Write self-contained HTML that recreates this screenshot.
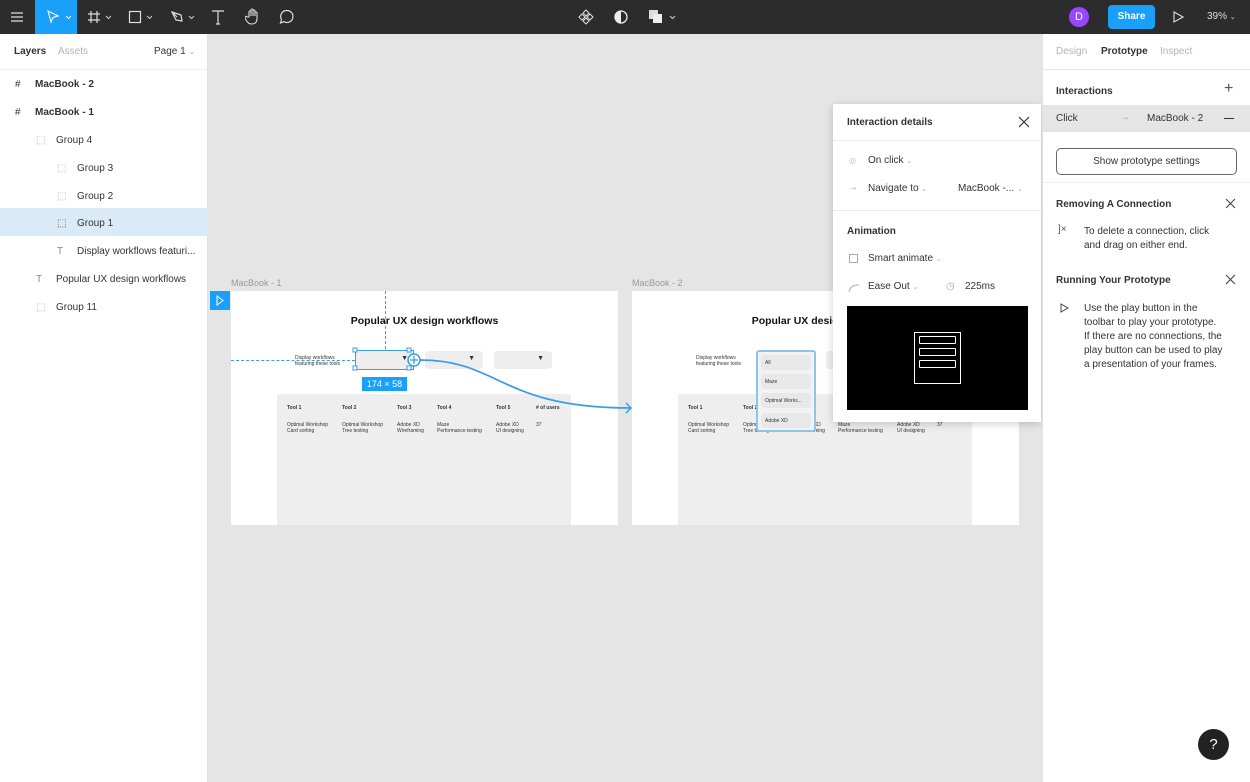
<!DOCTYPE html>
<html><head><style>
*{margin:0;padding:0;box-sizing:border-box}
body{width:1250px;height:782px;overflow:hidden;font-family:"Liberation Sans",sans-serif;background:#e5e5e5;position:relative;font-size:11px;color:#333}
.a{position:absolute}
.tb{left:0;top:0;width:1250px;height:34px;background:#2c2c2c}
.lp{left:0;top:34px;width:208px;height:748px;background:#fff;border-right:1px solid #e2e2e2}
.rp{left:1042px;top:34px;width:208px;height:748px;background:#fff;border-left:1px solid #e2e2e2}
.row{position:absolute;left:0;width:208px;height:28px;font-size:10px;line-height:28px;color:#333}
.row span{top:2px}
.sm{font-size:5px;color:#333;line-height:6px}
.b{font-weight:bold}
</style></head><body>
<div class="a tb">
 <svg class="a" style="left:10px;top:10px" width="14" height="14"><path d="M1 3h12M1 7h12M1 11h12" stroke="#ddd" stroke-width="1.2"/></svg>
 <div class="a" style="left:35px;top:0;width:42px;height:34px;background:#18a0fb"></div>
 <svg class="a" style="left:46px;top:10px" width="26" height="14"><path d="M2 1l10 5-5 1.5L5 12z" fill="none" stroke="#fff" stroke-width="1.1"/><path d="M20 6l2.5 2.5L25 6" fill="none" stroke="#fff"/></svg>
 <svg class="a" style="left:87px;top:10px" width="28" height="14"><path d="M4 1v12M10 1v12M1 4h12M1 10h12" stroke="#ddd" stroke-width="1.2"/><path d="M19 6l2.5 2.5L24 6" fill="none" stroke="#ccc"/></svg>
 <svg class="a" style="left:128px;top:10px" width="28" height="14"><rect x="1.5" y="1.5" width="11" height="11" fill="none" stroke="#ddd" stroke-width="1.2"/><path d="M19 6l2.5 2.5L24 6" fill="none" stroke="#ccc"/></svg>
 <svg class="a" style="left:170px;top:10px" width="28" height="14"><path d="M2 2l9 3 1 6-6-1z M2 2l5 5" fill="none" stroke="#ddd" stroke-width="1.2"/><path d="M19 6l2.5 2.5L24 6" fill="none" stroke="#ccc"/></svg>
 <svg class="a" style="left:211px;top:9px" width="14" height="16"><path d="M1 2h12M7 2v13M5 15h4" stroke="#ddd" stroke-width="1.2" fill="none"/></svg>
 <svg class="a" style="left:245px;top:8px" width="16" height="18"><path d="M4 9V4a1 1 0 012 0v4V2a1 1 0 012 0v6V3a1 1 0 012 0v5V5a1 1 0 012 0v6c0 3-2 5-5 5s-4-1-6-4l-1-2a1 1 0 012-1z" fill="none" stroke="#ddd" stroke-width="1.1"/></svg>
 <svg class="a" style="left:279px;top:9px" width="16" height="16"><path d="M8 1.5a6 6 0 11-3 11.2L1.5 14l1-3.5A6 6 0 018 1.5z" fill="none" stroke="#ddd" stroke-width="1.2"/></svg>
 <svg class="a" style="left:578px;top:9px" width="16" height="16"><path d="M8 1l3 3-3 3-3-3zM8 9l3 3-3 3-3-3zM4 5l3 3-3 3-3-3zM12 5l3 3-3 3-3-3z" fill="none" stroke="#ddd" stroke-width="1"/></svg>
 <svg class="a" style="left:614px;top:10px" width="14" height="14"><circle cx="7" cy="7" r="6" fill="none" stroke="#eee" stroke-width="1.3"/><path d="M7 1a6 6 0 000 12z" fill="#eee"/></svg>
 <svg class="a" style="left:648px;top:9px" width="30" height="16"><rect x="1" y="1" width="9" height="9" fill="#ddd"/><rect x="5" y="5" width="9" height="9" fill="#eee"/><path d="M22 7l2.5 2.5L27 7" fill="none" stroke="#ccc"/></svg>
 <div class="a" style="left:1069px;top:7px;width:20px;height:20px;border-radius:50%;background:#9747ff;color:#fff;font-size:11px;line-height:20px;text-align:center">D</div>
 <div class="a" style="left:1108px;top:5px;width:47px;height:24px;border-radius:4px;background:#18a0fb;color:#fff;font-size:10px;font-weight:bold;line-height:24px;text-align:center">Share</div>
 <svg class="a" style="left:1172px;top:11px" width="12" height="12"><path d="M2 1l9 5-9 5z" fill="none" stroke="#ddd" stroke-width="1.1"/></svg>
 <div class="a" style="left:1207px;top:11px;color:#ddd;font-size:10px">39% <span style="font-size:7px">⌄</span></div>
</div>

<div class="a lp">
 <div class="a b" style="left:14px;top:12px;font-size:10px;color:#333">Layers</div>
 <div class="a" style="left:58px;top:12px;font-size:10px;color:#b3b3b3">Assets</div>
 <div class="a" style="left:154px;top:12px;font-size:10px;color:#333">Page 1 <span style="color:#aaa;font-size:8px">⌄</span></div>
 <div class="a" style="left:0;top:35px;width:208px;height:1px;background:#eee"></div>
 <div class="row b" style="top:35px"><span style="position:absolute;left:15px;font-weight:normal">#</span><span style="position:absolute;left:35px">MacBook - 2</span></div>
 <div class="row b" style="top:63px"><span style="position:absolute;left:15px;font-weight:normal">#</span><span style="position:absolute;left:35px">MacBook - 1</span></div>
 <div class="row" style="top:91px"><span style="position:absolute;left:36px;color:#aaa">⬚</span><span style="position:absolute;left:56px">Group 4</span></div>
 <div class="row" style="top:119px"><span style="position:absolute;left:57px;color:#aaa">⬚</span><span style="position:absolute;left:77px">Group 3</span></div>
 <div class="row" style="top:147px"><span style="position:absolute;left:57px;color:#aaa">⬚</span><span style="position:absolute;left:77px">Group 2</span></div>
 <div class="row" style="top:174px;background:#daebf7"><span style="position:absolute;left:57px;color:#555">⬚</span><span style="position:absolute;left:77px">Group 1</span></div>
 <div class="row" style="top:202px"><span style="position:absolute;left:57px;color:#888">T</span><span style="position:absolute;left:77px">Display workflows featuri...</span></div>
 <div class="row" style="top:230px"><span style="position:absolute;left:36px;color:#888">T</span><span style="position:absolute;left:56px">Popular UX design workflows</span></div>
 <div class="row" style="top:258px"><span style="position:absolute;left:36px;color:#aaa">⬚</span><span style="position:absolute;left:56px">Group 11</span></div>
</div>

<!-- Frame 1 -->
<div class="a" style="left:231px;top:278px;font-size:9px;color:#999">MacBook - 1</div>
<div class="a" style="left:210px;top:291px;width:20px;height:19px;background:#18a0fb"><svg width="20" height="19"><path d="M7 5l6 4.5-6 4.5z" fill="none" stroke="#fff"/></svg></div>
<div class="a" style="left:231px;top:291px;width:387px;height:234px;background:#fff">
 <div class="a b" style="left:0;width:387px;top:24px;text-align:center;font-size:10.5px;color:#111">Popular UX design workflows</div>
 <div class="a sm" style="left:64px;top:64px">Display workflows<br>featuring these tools</div>
 <div class="a" style="left:124px;top:59px;width:59px;height:20px;background:#eee;border:1.5px solid #3a9ee4"><span style="position:absolute;right:5px;top:4px;font-size:7px">▼</span></div>
 <div class="a" style="left:194px;top:60px;width:58px;height:18px;background:#eee;border-radius:4px"><span style="position:absolute;right:8px;top:4px;font-size:7px">▼</span></div>
 <div class="a" style="left:263px;top:60px;width:58px;height:18px;background:#eee;border-radius:4px"><span style="position:absolute;right:8px;top:4px;font-size:7px">▼</span></div>
 <div class="a" style="left:46px;top:103px;width:294px;height:131px;background:#eee"></div>
 <div class="a sm b" style="left:56px;top:114px">Tool 1</div><div class="a sm b" style="left:111px;top:114px">Tool 2</div><div class="a sm b" style="left:166px;top:114px">Tool 3</div><div class="a sm b" style="left:206px;top:114px">Tool 4</div><div class="a sm b" style="left:265px;top:114px">Tool 5</div><div class="a sm b" style="left:305px;top:114px"># of users</div>
 <div class="a sm" style="left:56px;top:131px">Optimal Workshop<br>Card sorting</div><div class="a sm" style="left:111px;top:131px">Optimal Workshop<br>Tree testing</div><div class="a sm" style="left:166px;top:131px">Adobe XD<br>Wireframing</div><div class="a sm" style="left:206px;top:131px">Maze<br>Performance testing</div><div class="a sm" style="left:265px;top:131px">Adobe XD<br>UI designing</div><div class="a sm" style="left:305px;top:131px">37</div>
</div>
<div class="a" style="left:385px;top:291px;border-left:1px dashed #3a9ee4;height:58px"></div>
<div class="a" style="left:231px;top:360px;border-top:1px dashed #3a9ee4;width:124px"></div>
<div class="a" style="left:362px;top:377px;width:45px;height:14px;background:#18a0fb;color:#fff;font-size:9px;line-height:14px;text-align:center">174 × 58</div>
<svg class="a" style="left:350px;top:345px" width="290" height="70">
 <rect x="3" y="3" width="4" height="4" fill="#fff" stroke="#3a9ee4"/><rect x="57" y="3" width="4" height="4" fill="#fff" stroke="#3a9ee4"/><rect x="3" y="21" width="4" height="4" fill="#fff" stroke="#3a9ee4"/><rect x="57" y="21" width="4" height="4" fill="#fff" stroke="#3a9ee4"/>
 <path d="M70 15C150 15 150 63 280 63" fill="none" stroke="#3a9ee4" stroke-width="1.8"/>
 <path d="M276 58l5 5-5 5" fill="none" stroke="#3a9ee4" stroke-width="1.5"/>
 <circle cx="64" cy="15" r="6" fill="#fff" stroke="#3a9ee4" stroke-width="1.5"/><path d="M64 11v8M60 15h8" stroke="#3a9ee4" stroke-width="1.3"/>
</svg>

<!-- Frame 2 -->
<div class="a" style="left:632px;top:278px;font-size:9px;color:#999">MacBook - 2</div>
<div class="a" style="left:632px;top:291px;width:387px;height:234px;background:#fff">
 <div class="a b" style="left:0;width:387px;top:24px;text-align:center;font-size:10.5px;color:#111">Popular UX design workflows</div>
 <div class="a sm" style="left:64px;top:64px">Display workflows<br>featuring these tools</div>
 <div class="a" style="left:194px;top:60px;width:58px;height:18px;background:#eee;border-radius:4px"></div>
 <div class="a" style="left:46px;top:103px;width:294px;height:131px;background:#eee"></div>
 <div class="a sm b" style="left:56px;top:114px">Tool 1</div><div class="a sm b" style="left:111px;top:114px">Tool 2</div>
 <div class="a sm" style="left:56px;top:131px">Optimal Workshop<br>Card sorting</div><div class="a sm" style="left:111px;top:131px">Optimal Workshop<br>Tree testing</div><div class="a sm" style="left:166px;top:131px">Adobe XD<br>Wireframing</div><div class="a sm" style="left:206px;top:131px">Maze<br>Performance testing</div><div class="a sm" style="left:265px;top:131px">Adobe XD<br>UI designing</div><div class="a sm" style="left:305px;top:131px">37</div>
 <div class="a" style="left:124px;top:59px;width:60px;height:82px;background:#f2f2f2;border:2px solid #8cc4ec;border-radius:3px">
  <div class="a sm" style="left:3px;top:3px;width:50px;height:15px;background:#e8e8e8;border-radius:4px;padding:5px 4px">All</div>
  <div class="a sm" style="left:3px;top:22px;width:50px;height:15px;background:#e8e8e8;border-radius:4px;padding:5px 4px">Maze</div>
  <div class="a sm" style="left:3px;top:41px;width:50px;height:15px;background:#e8e8e8;border-radius:4px;padding:5px 4px">Optimal Works...</div>
  <div class="a sm" style="left:3px;top:61px;width:50px;height:15px;background:#e8e8e8;border-radius:4px;padding:5px 4px">Adobe XD</div>
 </div>
</div>

<!-- Popup -->
<div class="a" style="left:833px;top:104px;width:208px;height:318px;background:#fff;box-shadow:0 2px 8px rgba(0,0,0,.18);font-size:10px">
 <div class="a b" style="left:14px;top:13px">Interaction details</div>
 <svg class="a" style="left:185px;top:12px" width="12" height="12"><path d="M1 1l10 10M11 1L1 11" stroke="#333" stroke-width="1.2"/></svg>
 <div class="a" style="left:0;top:36px;width:208px;height:1px;background:#e8e8e8"></div>
 <div class="a" style="left:16px;top:52px;color:#bbb;font-size:8px">◎</div>
 <div class="a" style="left:35px;top:51px">On click <span style="color:#aaa;font-size:7px">⌄</span></div>
 <div class="a" style="left:15px;top:78px;color:#aaa">→</div>
 <div class="a" style="left:35px;top:79px">Navigate to <span style="color:#aaa;font-size:7px">⌄</span></div>
 <div class="a" style="left:125px;top:79px">MacBook -... <span style="color:#aaa;font-size:7px">⌄</span></div>
 <div class="a" style="left:0;top:106px;width:208px;height:1px;background:#e8e8e8"></div>
 <div class="a b" style="left:14px;top:122px">Animation</div>
 <div class="a" style="left:16px;top:150px;width:9px;height:9px;border:1px solid #aaa"></div>
 <div class="a" style="left:35px;top:149px">Smart animate <span style="color:#aaa;font-size:7px">⌄</span></div>
 <svg class="a" style="left:15px;top:179px" width="12" height="10"><path d="M1 9Q2 2 11 2" fill="none" stroke="#aaa"/></svg>
 <div class="a" style="left:35px;top:177px">Ease Out <span style="color:#aaa;font-size:7px">⌄</span></div>
 <div class="a" style="left:113px;top:177px;color:#aaa">◷</div>
 <div class="a" style="left:132px;top:177px">225ms</div>
 <div class="a" style="left:14px;top:202px;width:181px;height:104px;background:#000">
  <div class="a" style="left:67px;top:26px;width:47px;height:52px;border:1px solid #fff"></div>
  <div class="a" style="left:72px;top:30px;width:37px;height:8px;border:1px solid #fff;border-radius:1px"></div>
  <div class="a" style="left:72px;top:42px;width:37px;height:8px;border:1px solid #fff;border-radius:1px"></div>
  <div class="a" style="left:72px;top:54px;width:37px;height:8px;border:1px solid #fff;border-radius:1px"></div>
 </div>
</div>

<!-- Right panel -->
<div class="a rp">
 <div class="a" style="left:13px;top:12px;font-size:10px;color:#b3b3b3">Design</div>
 <div class="a b" style="left:58px;top:12px;font-size:10px">Prototype</div>
 <div class="a" style="left:117px;top:12px;font-size:10px;color:#b3b3b3">Inspect</div>
 <div class="a" style="left:0;top:35px;width:208px;height:1px;background:#e5e5e5"></div>
 <div class="a b" style="left:13px;top:52px;font-size:10px">Interactions</div>
 <div class="a" style="left:181px;top:46px;font-size:16px;color:#555">+</div>
 <div class="a" style="left:0;top:71px;width:208px;height:27px;background:#e5e5e5"></div>
 <div class="a" style="left:13px;top:79px;font-size:10px">Click</div>
 <div class="a" style="left:77px;top:78px;font-size:10px;color:#aaa">→</div>
 <div class="a" style="left:104px;top:79px;font-size:10px">MacBook - 2</div>
 <div class="a" style="left:181px;top:84px;width:10px;height:1px;background:#333"></div>
 <div class="a" style="left:13px;top:114px;width:181px;height:27px;border:1px solid #666;border-radius:5px;font-size:10px;text-align:center;line-height:25px">Show prototype settings</div>
 <div class="a" style="left:0;top:148px;width:208px;height:1px;background:#eee"></div>
 <div class="a b" style="left:13px;top:165px;font-size:10px">Removing A Connection</div>
 <svg class="a" style="left:182px;top:164px" width="11" height="11"><path d="M1 1l9 9M10 1L1 10" stroke="#444" stroke-width="1.1"/></svg>
 <div class="a" style="left:15px;top:190px;font-size:10px;color:#555">]×</div>
 <div class="a" style="left:41px;top:191px;font-size:10px;line-height:14px;color:#333">To delete a connection, click<br>and drag on either end.</div>
 <div class="a b" style="left:13px;top:241px;font-size:10px">Running Your Prototype</div>
 <svg class="a" style="left:182px;top:240px" width="11" height="11"><path d="M1 1l9 9M10 1L1 10" stroke="#444" stroke-width="1.1"/></svg>
 <svg class="a" style="left:17px;top:269px" width="10" height="10"><path d="M1 1l7 4-7 4z" fill="none" stroke="#444"/></svg>
 <div class="a" style="left:41px;top:268px;font-size:10px;line-height:14px;color:#333">Use the play button in the<br>toolbar to play your prototype.<br>If there are no connections, the<br>play button can be used to play<br>a presentation of your frames.</div>
</div>
<div class="a" style="left:1198px;top:729px;width:31px;height:31px;border-radius:50%;background:#222;color:#fff;font-size:15px;line-height:31px;text-align:center">?</div>
</body></html>
